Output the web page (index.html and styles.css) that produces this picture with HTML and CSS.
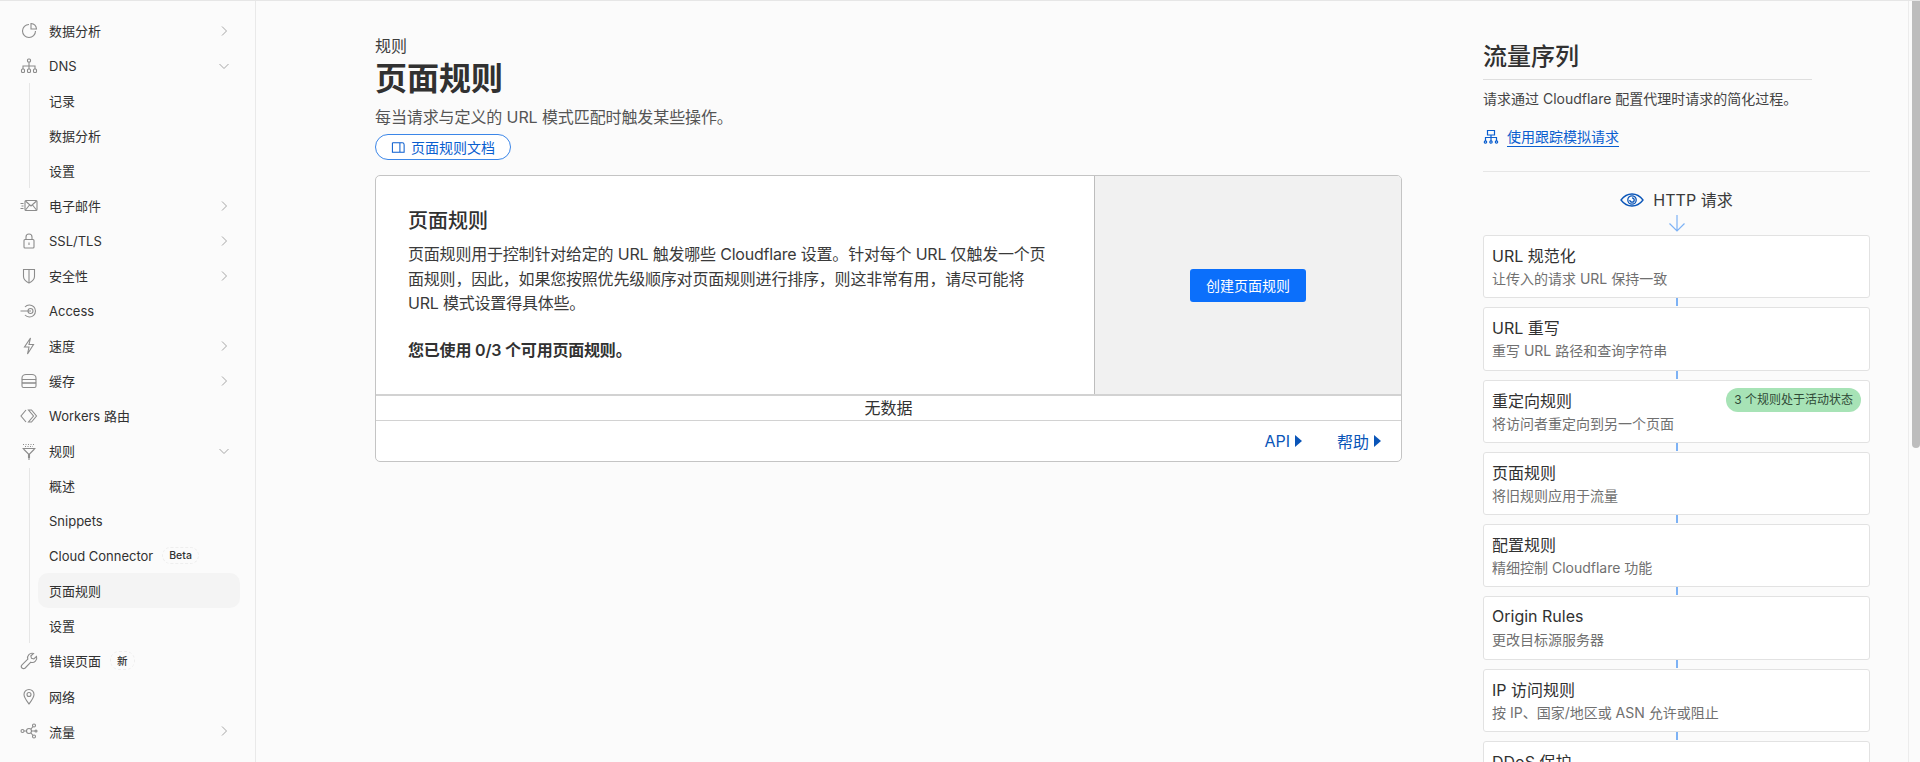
FILE: index.html
```html
<!DOCTYPE html>
<html lang="zh">
<head>
    <title>页面规则</title>
    <meta charset="UTF-8">
    <link rel="stylesheet" href="styles.css">
</head>
<body>
    <div class="app">
        <nav class="sidebar">
            <a class="nav-item"><svg class="nav-icon" viewBox="0 0 20 20"><path d="M10 3.5a6.5 6.5 0 1 0 6.5 6.5"/><path d="M12 2.5a6 6 0 0 1 5.5 5.5H12z"/></svg><span>数据分析</span><svg class="chevron" viewBox="0 0 12 12"><path d="M4 1.5 8.5 6 4 10.5"/></svg></a>
            <a class="nav-item"><svg class="nav-icon" viewBox="0 0 20 20"><rect x="8.5" y="3" width="3" height="3" rx="1"/><path d="M10 6v4M4 13v-3h12v3M10 10v3"/><rect x="2.5" y="13" width="3" height="3.5" rx="1"/><rect x="8.5" y="13" width="3" height="3.5" rx="1"/><rect x="14.5" y="13" width="3" height="3.5" rx="1"/></svg><span>DNS</span><svg class="chevron" viewBox="0 0 12 12"><path d="M1.5 4 6 8.5 10.5 4"/></svg></a>
            <div class="sub-list">
                <a class="sub-item">记录</a>
                <a class="sub-item">数据分析</a>
                <a class="sub-item">设置</a>
            </div>
            <a class="nav-item"><svg class="nav-icon" viewBox="0 0 20 20"><rect x="6" y="4.5" width="12" height="10" rx="1"/><path d="m6.5 5 5.5 5 5.5-5M6.5 14l4-5M17.5 14l-4-5M1.5 7.5h3M2.5 10h2M1.5 12.5h3"/></svg><span>电子邮件</span><svg class="chevron" viewBox="0 0 12 12"><path d="M4 1.5 8.5 6 4 10.5"/></svg></a>
            <a class="nav-item"><svg class="nav-icon" viewBox="0 0 20 20"><rect x="5" y="8.5" width="10" height="8.5" rx="1"/><path d="M7 8.5V6a3 3 0 0 1 6 0v2.5M10 11.5V14"/></svg><span>SSL/TLS</span><svg class="chevron" viewBox="0 0 12 12"><path d="M4 1.5 8.5 6 4 10.5"/></svg></a>
            <a class="nav-item"><svg class="nav-icon" viewBox="0 0 20 20"><path d="M4.5 3.5h11v7c0 3-2.5 5-5.5 6.5-3-1.5-5.5-3.5-5.5-6.5z"/><path d="M10 3.5V17"/></svg><span>安全性</span><svg class="chevron" viewBox="0 0 12 12"><path d="M4 1.5 8.5 6 4 10.5"/></svg></a>
            <a class="nav-item"><svg class="nav-icon" viewBox="0 0 20 20"><path d="M6 6a6 6 0 1 1 0 8M1.5 10H12"/><circle cx="11.5" cy="10" r="2.5"/></svg><span>Access</span></a>
            <a class="nav-item"><svg class="nav-icon" viewBox="0 0 20 20"><path d="M11.5 2 5.5 11H10l-1.5 7 6-9.5H10z"/></svg><span>速度</span><svg class="chevron" viewBox="0 0 12 12"><path d="M4 1.5 8.5 6 4 10.5"/></svg></a>
            <a class="nav-item"><svg class="nav-icon" viewBox="0 0 20 20"><path d="M3 8.5V7c0-2 2-3.5 4-3.5h6c2 0 4 1.5 4 3.5v1.5z"/><rect x="3" y="8.5" width="14" height="3.5" rx="1"/><path d="M3 12h14v3a1.5 1.5 0 0 1-1.5 1.5h-11A1.5 1.5 0 0 1 3 15z"/></svg><span>缓存</span><svg class="chevron" viewBox="0 0 12 12"><path d="M4 1.5 8.5 6 4 10.5"/></svg></a>
            <a class="nav-item"><svg class="nav-icon" viewBox="0 0 20 20"><path d="M7 4 2 10l5 6M9.5 4h3l5 6-5 6h-3l5-6z"/></svg><span>Workers 路由</span></a>
            <a class="nav-item"><svg class="nav-icon" viewBox="0 0 20 20"><path d="M3.5 7.5h13M4.5 8l5 5v3.5h1V13l5-5M10 16.5V19"/><path class="dots" d="M4 3.5h12M6 5.5h8"/></svg><span>规则</span><svg class="chevron" viewBox="0 0 12 12"><path d="M1.5 4 6 8.5 10.5 4"/></svg></a>
            <div class="sub-list">
                <a class="sub-item">概述</a>
                <a class="sub-item">Snippets</a>
                <a class="sub-item">Cloud Connector<span class="tag">Beta</span></a>
                <a class="sub-item active">页面规则</a>
                <a class="sub-item">设置</a>
            </div>
            <a class="nav-item"><svg class="nav-icon" viewBox="0 0 20 20"><path d="M17.5 5.5 14.8 8l-2.3-.7-.7-2.3 2.7-2.5a4.5 4.5 0 0 0-5.700 5.700L3 13.800A2.200 2.200 0 0 0 6.200 17l5.600-5.800a4.500 4.500 0 0 0 5.700-5.700z"/></svg><span>错误页面</span><span class="tag">新</span></a>
            <a class="nav-item"><svg class="nav-icon" viewBox="0 0 20 20"><path d="M10 18c-3-4-5-6.5-5-9.5a5 5 0 0 1 10 0c0 3-2 5.5-5 9.5z"/><circle cx="10" cy="8.5" r="2"/></svg><span>网络</span></a>
            <a class="nav-item"><svg class="nav-icon" viewBox="0 0 20 20"><circle cx="3.5" cy="10" r="1.5"/><circle cx="10" cy="10" r="2.5"/><circle cx="15" cy="4.5" r="1.5"/><circle cx="15" cy="15.5" r="1.5"/><circle cx="17" cy="10" r="1"/><path d="M5 10h2.5M12 8l2-2.5M12 12l2 2.5M12.5 10H16"/></svg><span>流量</span><svg class="chevron" viewBox="0 0 12 12"><path d="M4 1.5 8.5 6 4 10.5"/></svg></a>
        </nav>

        <main class="content">
            <div class="crumb">规则</div>
            <h1>页面规则</h1>
            <p class="page-desc">每当请求与定义的 URL 模式匹配时触发某些操作。</p>
            <a class="docs-pill"><svg viewBox="0 0 16 16"><path d="M1.5 3H12a2 2 0 0 1 2 2v8H5M1.5 3v10H9M9.5 3v10"/></svg>页面规则文档</a>

            <section class="rules-card">
                <div class="rules-top">
                    <div class="rules-intro">
                        <h3>页面规则</h3>
                        <p>页面规则用于控制针对给定的 URL 触发哪些 Cloudflare 设置。针对每个 URL 仅触发一个页面规则，因此，如果您按照优先级顺序对页面规则进行排序，则这非常有用，请尽可能将 URL 模式设置得具体些。</p>
                        <p class="usage">您已使用 0/3 个可用页面规则。</p>
                    </div>
                    <div class="rules-action">
                        <button>创建页面规则</button>
                    </div>
                </div>
                <div class="rules-empty">无数据</div>
                <div class="rules-foot">
                    <a>API<i class="caret"></i></a>
                    <a>帮助<i class="caret"></i></a>
                </div>
            </section>
        </main>

        <aside class="sequence">
            <h2>流量序列</h2>
            <p class="seq-desc">请求通过 Cloudflare 配置代理时请求的简化过程。</p>
            <a class="trace-link"><svg viewBox="0 0 16 16"><path d="M4.5 1.5h7V6h-7zM2.5 12V8.5h11V12M8 6v6"/><circle cx="2.5" cy="13" r="1.2"/><circle cx="8" cy="13" r="1.2"/><circle cx="13.5" cy="13" r="1.2"/></svg><span>使用跟踪模拟请求</span></a>
            <div class="http-head"><svg viewBox="0 0 24 14"><path d="M1 7c3-4 7-6 11-6s8 2 11 6c-3 4-7 6-11 6S4 11 1 7z"/><circle cx="12" cy="7" r="4.2"/><path d="M12 4.8A2.2 2.2 0 1 1 9.8 7"/></svg>HTTP 请求</div>
            <svg class="down-arrow" viewBox="0 0 18 18"><path d="M9 1v16M1.5 9.5 9 17l7.5-7.5"/></svg>
            <div class="steps">
                <div class="step"><div class="step-title">URL 规范化</div><div class="step-sub">让传入的请求 URL 保持一致</div></div>
                <div class="step"><div class="step-title">URL 重写</div><div class="step-sub">重写 URL 路径和查询字符串</div></div>
                <div class="step"><div class="step-title">重定向规则<span class="active-badge">3 个规则处于活动状态</span></div><div class="step-sub">将访问者重定向到另一个页面</div></div>
                <div class="step"><div class="step-title">页面规则</div><div class="step-sub">将旧规则应用于流量</div></div>
                <div class="step"><div class="step-title">配置规则</div><div class="step-sub">精细控制 Cloudflare 功能</div></div>
                <div class="step"><div class="step-title">Origin Rules</div><div class="step-sub">更改目标源服务器</div></div>
                <div class="step"><div class="step-title">IP 访问规则</div><div class="step-sub">按 IP、国家/地区或 ASN 允许或阻止</div></div>
                <div class="step"><div class="step-title">DDoS 保护</div></div>
            </div>
        </aside>

        <div class="scrollbar"><div class="scroll-thumb"></div></div>
    </div>
</body>
</html>
```

FILE: styles.css
```css
html, body {
    height: 100%;
    margin: 0;
    overflow: hidden;
}
body {
    font-family: Inter, "Noto Sans CJK SC", sans-serif;
    color: #313131;
    background-color: #fbfbfb;
    border-top: 1px solid #e6e6e6;
    box-sizing: border-box;
}
a {
    cursor: pointer;
}
.app {
    display: flex;
    height: 761px;
    overflow: hidden;
}

/* sidebar */
.sidebar {
    flex: 0 0 256px;
    box-sizing: border-box;
    padding: 12px 25px 0 19px;
    border-right: 1px solid #e9e9e9;
    font-size: 13px;
    color: #313131;
}
.nav-item {
    display: flex;
    align-items: center;
    height: 35.05px;
}
.nav-icon {
    flex: none;
    width: 20px;
    height: 20px;
    margin-right: 10px;
    fill: none;
    stroke: #8c8c8c;
    stroke-width: 1.1;
}
.nav-icon .dots {
    stroke-dasharray: 1 1.5;
}
.chevron {
    width: 12px;
    height: 12px;
    margin-left: auto;
    fill: none;
    stroke: #a6a6a6;
    stroke-width: 1;
}
.sub-list {
    margin-left: 9.5px;
    border-left: 1px solid #e6e6e6;
}
.sub-item {
    display: flex;
    align-items: center;
    height: 35px;
    margin-left: 8px;
    margin-right: -10px;
    padding-left: 11.5px;
    border-radius: 10px;
}
.sub-item.active {
    background-color: #f4f4f4;
}
.tag {
    margin-left: 9px;
    padding: 1px 6px;
    border: 1px dashed #eeeeee;
    border-radius: 9px;
    font-size: 10.5px;
    font-weight: 500;
}

/* main column */
.content {
    flex: 0 0 1027px;
    margin-left: 119px;
    padding-top: 35px;
}
.crumb {
    font-size: 16px;
    line-height: 20px;
    color: #3d3d3d;
}
h1 {
    margin: 1px 0 0;
    font-size: 32px;
    font-weight: 700;
    line-height: 44px;
    color: #313131;
}
.page-desc {
    margin: 5px 0 0;
    font-size: 16px;
    line-height: 22px;
    letter-spacing: -0.1px;
    color: #555555;
}
.docs-pill {
    display: flex;
    align-items: center;
    width: fit-content;
    height: 24px;
    margin-top: 6px;
    padding: 0 15px;
    border: 1px solid #3b86e8;
    border-radius: 13px;
    background-color: #ffffff;
    font-size: 14px;
    color: #0a5ecf;
}
.docs-pill svg {
    width: 15px;
    height: 15px;
    margin-right: 5px;
    fill: none;
    stroke: #0a5ecf;
    stroke-width: 1.1;
}
.rules-card {
    margin-top: 15px;
    border: 1px solid #c4c4c4;
    border-radius: 5px;
    background-color: #ffffff;
    overflow: hidden;
}
.rules-top {
    display: flex;
    height: 218px;
}
.rules-intro {
    flex: 0 0 719px;
    box-sizing: border-box;
    padding: 32px 43px 0 32px;
    border-right: 1px solid #bdbdbd;
}
.rules-intro h3 {
    margin: 0;
    font-size: 20px;
    font-weight: 500;
    line-height: 26px;
}
.rules-intro p {
    margin: 8px 0 0;
    font-size: 16px;
    line-height: 24.5px;
    letter-spacing: -0.2px;
    color: #3a3a3a;
}
.rules-intro .usage {
    margin-top: 22px;
    font-weight: 600;
    color: #313131;
}
.rules-action {
    flex: 1;
    display: flex;
    align-items: center;
    justify-content: center;
    background-color: #f1f1f1;
}
.rules-action button {
    height: 33px;
    width: 116px;
    border: none;
    border-radius: 3px;
    background-color: #0b6ffb;
    font: inherit;
    font-size: 14px;
    color: #ffffff;
}
.rules-empty {
    height: 24px;
    border-top: 2px solid #d2d2d2;
    border-bottom: 1px solid #d2d2d2;
    text-align: center;
    font-size: 16px;
    line-height: 24px;
}
.rules-foot {
    display: flex;
    justify-content: flex-end;
    align-items: center;
    gap: 35px;
    height: 40px;
    padding-right: 20px;
    font-size: 16px;
    color: #0a55b8;
}
.rules-foot a {
    display: flex;
    align-items: center;
}
.caret {
    width: 0;
    height: 0;
    margin-left: 5px;
    border-left: 7px solid #0a55b8;
    border-top: 6.5px solid transparent;
    border-bottom: 6.5px solid transparent;
}

/* traffic sequence */
.sequence {
    flex: 0 0 387px;
    margin-left: 81px;
    padding-top: 39px;
}
.sequence h2 {
    width: 329px;
    margin: 0;
    padding-bottom: 5px;
    border-bottom: 1px solid #dedede;
    font-size: 24px;
    font-weight: 500;
    line-height: 34px;
    color: #313131;
}
.seq-desc {
    margin: 9px 0 0;
    font-size: 14px;
    line-height: 20px;
    color: #444444;
}
.trace-link {
    display: flex;
    align-items: center;
    margin-top: 18px;
    padding-bottom: 24px;
    border-bottom: 1px solid #e6e6e6;
    font-size: 14px;
    color: #0a5ecf;
}
.trace-link svg {
    width: 16px;
    height: 16px;
    margin-right: 8px;
    fill: none;
    stroke: #0a5ecf;
    stroke-width: 1.2;
}
.trace-link span {
    border-bottom: 1px solid #0a5ecf;
    line-height: 19px;
}
.http-head {
    display: flex;
    align-items: center;
    justify-content: center;
    margin-top: 17px;
    font-size: 16px;
    line-height: 22px;
    color: #3a3a3a;
}
.http-head svg {
    width: 24px;
    height: 14px;
    margin-right: 9px;
    fill: none;
    stroke: #0a55b8;
    stroke-width: 1.3;
}
.down-arrow {
    display: block;
    width: 18px;
    height: 18px;
    margin: 3px auto 3px;
    fill: none;
    stroke: #7db2f5;
    stroke-width: 1.2;
}
.steps {
    display: flex;
    flex-direction: column;
    gap: 9px;
}
.step {
    position: relative;
    box-sizing: border-box;
    height: 63.3px;
    padding: 7px 8px 0;
    border: 1px solid #e2e2e2;
    border-radius: 3px;
    background-color: #ffffff;
}
.step::after {
    content: "";
    position: absolute;
    left: 50%;
    bottom: -9px;
    width: 2px;
    height: 8px;
    margin-left: -1px;
    background-color: #7db2f5;
}
.step-title {
    display: flex;
    align-items: center;
    justify-content: space-between;
    height: 24px;
    font-size: 16px;
    color: #313131;
}
.step-sub {
    margin-top: 2px;
    font-size: 14px;
    line-height: 20px;
    color: #707070;
}
.active-badge {
    padding: 0 8px;
    height: 24px;
    line-height: 24px;
    border-radius: 12px;
    background-color: #a7e3b6;
    font-size: 12px;
    color: #2f4a36;
}
.scrollbar {
    flex: 0 0 11px;
    margin-left: auto;
    border-left: 1px solid #ececec;
    background-color: #fbfbfb;
}
.scroll-thumb {
    width: 8px;
    height: 447px;
    margin-left: 3px;
    border-radius: 0 0 4px 4px;
    background-color: #bdbdbd;
}
```
